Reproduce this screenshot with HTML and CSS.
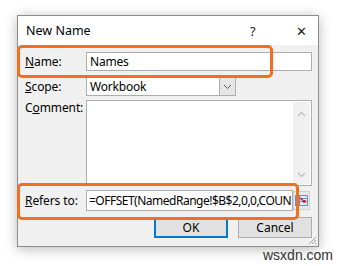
FILE: index.html
```html
<!DOCTYPE html>
<html lang="en">
<head>
  <meta charset="UTF-8">
  <title>New Name</title>
  <link rel="stylesheet" href="styles.css">
</head>
<body>
  <div class="dialog">
    <div class="titlebar">
      <span class="title">New Name</span>
      <span class="help">?</span>
      <span class="close">&#x2715;</span>
    </div>
    <div class="content">
      <div class="row row-name">
        <label class="lbl"><u>N</u>ame:</label>
        <div class="field field-name">Names</div>
      </div>
      <div class="row row-scope">
        <label class="lbl"><u>S</u>cope:</label>
        <div class="field select">
          <span class="select-text">Workbook</span>
          <span class="drop">
            <svg width="9" height="6" viewBox="0 0 9 6"><path d="M1 1 L4.5 4.5 L8 1" fill="none" stroke="#555" stroke-width="1"/></svg>
          </span>
        </div>
      </div>
      <div class="row row-comment">
        <label class="lbl">C<u>o</u>mment:</label>
        <div class="field textarea">
          <div class="scroll">
            <svg width="9" height="6" viewBox="0 0 9 6"><path d="M1 5 L4.5 1.5 L8 5" fill="none" stroke="#bcbcbc" stroke-width="1.2"/></svg>
            <svg width="9" height="6" viewBox="0 0 9 6"><path d="M1 1 L4.5 4.5 L8 1" fill="none" stroke="#bcbcbc" stroke-width="1.2"/></svg>
          </div>
        </div>
      </div>
      <div class="row row-refers">
        <label class="lbl"><u>R</u>efers to:</label>
        <div class="field field-refers">=OFFSET(NamedRange!$B$2,0,0,COUN</div>
        <span class="refbtn">
          <svg width="15" height="15" viewBox="0 0 15 15">
            <rect x="1.5" y="2.5" width="12" height="10" fill="#dfe9f6" stroke="#6a8fc0"/>
            <path d="M1.5 5.5 H13.5 M1.5 8.5 H13.5 M5.5 2.5 V12.5" stroke="#6a8fc0" fill="none"/>
            <path d="M6 5 L11 9 M9 9 H11 V7" stroke="#d0202a" stroke-width="1.5" fill="none"/>
          </svg>
        </span>
      </div>
      <div class="buttons">
        <button class="btn btn-ok">OK</button>
        <button class="btn">Cancel</button>
      </div>
    </div>
    <svg class="grip" width="10" height="10" viewBox="0 0 10 10">
      <path d="M9 2 L2 9 M9 5 L5 9 M9 8 L8 9" stroke="#a0a0a0" stroke-width="1"/>
    </svg>
    <div class="mark mark-name"></div>
    <div class="mark mark-refers"></div>
  </div>
  <div class="watermark">wsxdn.com</div>
</body>
</html>
```

FILE: styles.css
```css
* {
  margin: 0;
  padding: 0;
  box-sizing: border-box;
}
body {
  font-family: 'Noto Sans', 'Open Sans', sans-serif;
  font-size: 12px;
  color: #000;
  background-color: #fff;
  width: 337px;
  height: 266px;
  overflow: hidden;
  padding: 15px 0 0 17px;
}
.dialog {
  position: relative;
  width: 302px;
  height: 232px;
  background-color: #f0f0f0;
  border: 1px solid #8c8c8c;
  box-shadow: 0 2px 12px rgba(0,0,0,0.28);
}
.titlebar {
  height: 29px;
  background-color: #fff;
  display: flex;
  align-items: center;
  padding-left: 8px;
  font-size: 12.5px;
}
.title {
  flex: 1;
}
.help {
  width: 18px;
  margin-right: 28px;
  font-size: 13px;
  color: #222;
}
.close {
  width: 22px;
  font-size: 13px;
  color: #222;
}
.content {
  padding: 7px 5px 0 7px;
}
.row {
  display: flex;
  align-items: center;
}
.lbl {
  width: 61px;
  line-height: 16px;
  letter-spacing: -0.1px;
}
.field {
  background-color: #fff;
  border: 1px solid #adadad;
  padding: 0 3px;
  line-height: 17px;
  white-space: nowrap;
  overflow: hidden;
  letter-spacing: -0.2px;
}
.field-name {
  width: 226px;
  height: 19px;
}
.row-scope {
  margin-top: 6px;
}
.select {
  width: 150px;
  height: 19px;
  display: flex;
  padding-right: 0;
}
.select-text {
  flex: 1;
}
.drop {
  width: 16px;
  height: 17px;
  background-color: #e6e6e6;
  border-left: 1px solid #adadad;
  display: flex;
  align-items: center;
  justify-content: center;
}
.row-comment {
  margin-top: 4px;
  align-items: flex-start;
}
.textarea {
  width: 226px;
  height: 86px;
  display: flex;
  justify-content: flex-end;
  padding: 1px;
}
.scroll {
  width: 17px;
  background-color: #f0f0f0;
  display: flex;
  flex-direction: column;
  justify-content: space-between;
  align-items: center;
  padding: 9px 0 6px;
}
.row-refers {
  margin-top: 4px;
}
.field-refers {
  width: 207px;
  height: 21px;
  line-height: 19px;
  padding-left: 2px;
  letter-spacing: -0.5px;
}
.refbtn {
  width: 17px;
  height: 19px;
  display: flex;
  align-items: center;
  justify-content: center;
  background-color: #e8e8e8;
  border: 1px solid #d0d0d0;
}
.buttons {
  display: flex;
  justify-content: flex-end;
  gap: 10px;
  margin-top: 6px;
  padding-right: 1px;
}
.btn {
  width: 74px;
  height: 21px;
  font-family: inherit;
  font-size: 12px;
  background-color: #e1e1e1;
  border: 1px solid #adadad;
}
.btn-ok {
  border: 2px solid #0078d7;
}
.grip {
  position: absolute;
  right: 1px;
  bottom: 1px;
}
.mark {
  position: absolute;
  border: 3px solid #f07020;
  border-radius: 5px;
}
.mark-name {
  left: -1px;
  top: 29px;
  width: 256px;
  height: 33px;
}
.mark-refers {
  left: -1px;
  top: 167px;
  width: 282px;
  height: 37px;
}
.watermark {
  position: absolute;
  left: 263px;
  top: 247px;
  font-family: 'Liberation Sans', sans-serif;
  font-size: 14px;
  color: #333;
}
```
